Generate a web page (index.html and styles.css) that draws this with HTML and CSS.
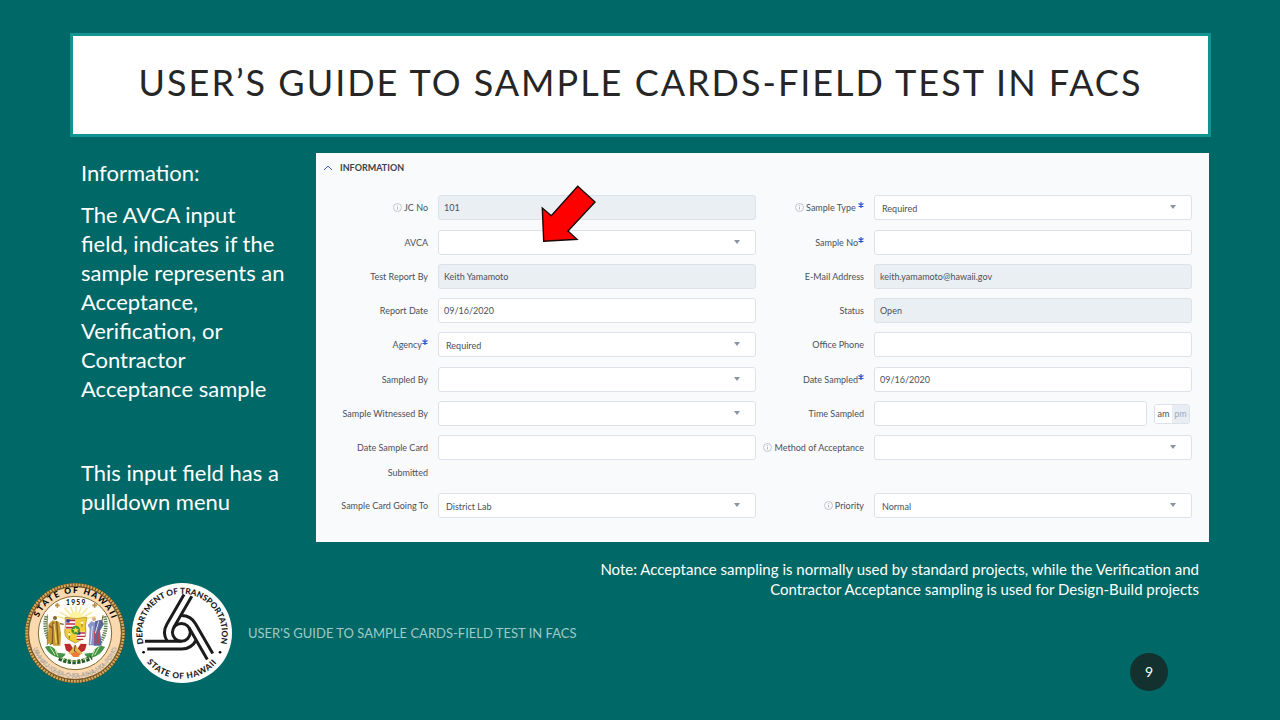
FILE: index.html
```html
<!DOCTYPE html>
<html lang="en">
<head>
    <meta charset="UTF-8">
    <meta name="viewport" content="width=device-width, initial-scale=1.0">
    <title>User's Guide to Sample Cards</title>
    <link rel="stylesheet" href="styles.css">
</head>
<body>
    <svg class="defs" width="0" height="0" aria-hidden="true">
        <symbol id="info" viewBox="0 0 18 18">
            <circle cx="9" cy="9" r="8" fill="none" stroke="currentColor" stroke-width="1.5"/>
            <path d="M9 8v5M9 4.5v2" stroke="currentColor" stroke-width="2"/>
        </symbol>
        <symbol id="star" viewBox="0 0 12 12">
            <path d="M6 0v12M1 3l10 6M11 3L1 9" stroke="currentColor" stroke-width="2.4"/>
        </symbol>
    </svg>

    <header class="title-box">
        <h1>USER’S GUIDE TO SAMPLE CARDS-FIELD TEST IN FACS</h1>
    </header>

    <main class="content">
        <section class="side">
            <p>Information:</p>
            <p>The AVCA input field, indicates if the sample represents an Acceptance, Verification, or Contractor Acceptance sample</p>
            <p class="spaced">This input field has a pulldown menu</p>
        </section>

        <form class="panel">
            <h2>
                <svg class="chevron" viewBox="0 0 8 6"><path d="M0 5l4-4 4 4" fill="none" stroke="#3d55c4"/></svg>
                INFORMATION
            </h2>
            <div class="fields">
                <label for="jc"><svg class="info"><use href="#info"/></svg> JC No</label>
                <input id="jc" type="text" value="101" readonly>
                <label for="type"><svg class="info"><use href="#info"/></svg> Sample Type <svg class="star"><use href="#star"/></svg></label>
                <div class="select"><select id="type"><option>Required</option></select></div>

                <label for="avca">AVCA</label>
                <div class="select"><select id="avca"><option></option></select></div>
                <label for="sampleno">Sample No<svg class="star"><use href="#star"/></svg></label>
                <input id="sampleno" type="text">

                <label for="reportby">Test Report By</label>
                <input id="reportby" type="text" value="Keith Yamamoto" readonly>
                <label for="email">E-Mail Address</label>
                <input id="email" type="text" value="keith.yamamoto@hawaii.gov" readonly>

                <label for="reportdate">Report Date</label>
                <input id="reportdate" type="text" value="09/16/2020">
                <label for="status">Status</label>
                <input id="status" type="text" value="Open" readonly>

                <label for="agency">Agency<svg class="star"><use href="#star"/></svg></label>
                <div class="select"><select id="agency"><option>Required</option></select></div>
                <label for="phone">Office Phone</label>
                <input id="phone" type="text">

                <label for="sampledby">Sampled By</label>
                <div class="select"><select id="sampledby"><option></option></select></div>
                <label for="datesampled">Date Sampled<svg class="star"><use href="#star"/></svg></label>
                <input id="datesampled" type="text" value="09/16/2020">

                <label for="witness">Sample Witnessed By</label>
                <div class="select"><select id="witness"><option></option></select></div>
                <label for="time">Time Sampled</label>
                <div class="time">
                    <input id="time" type="text">
                    <div class="ampm">
                        <button type="button">am</button>
                        <button type="button" class="off">pm</button>
                    </div>
                </div>

                <label for="submitted">Date Sample Card Submitted</label>
                <input id="submitted" type="text">
                <label for="method"><svg class="info"><use href="#info"/></svg> Method of Acceptance</label>
                <div class="select"><select id="method"><option></option></select></div>

                <label for="going">Sample Card Going To</label>
                <div class="select"><select id="going"><option>District Lab</option></select></div>
                <label for="priority"><svg class="info"><use href="#info"/></svg> Priority</label>
                <div class="select"><select id="priority"><option>Normal</option></select></div>
            </div>

            <svg class="arrow" viewBox="0 0 58 60">
                <path d="M3.7 57.3L2.3 24l9 7.7L37.7 2.3 55 18 28 47l9 8.3z" fill="#ff0000" stroke="#1a0808" stroke-width="1.4"/>
            </svg>
        </form>
    </main>

    <footer class="bottom">
        <div class="brand">
            <svg class="seal" viewBox="14 15 300 300" role="img" aria-label="State of Hawaii seal">
                <defs>
                    <path id="sealTop" d="M48 185A118 118 0 1 1 280 185"/>
                    <path id="sealBottom" d="M30 165a134 134 0 0 0 268 0"/>
                </defs>
                <circle cx="164" cy="165" r="150" fill="#6d4c1d"/>
                <circle cx="164" cy="165" r="145" fill="none" stroke="#d5ab5f" stroke-width="8" stroke-dasharray="6 3"/>
                <circle cx="164" cy="165" r="139" fill="#fbd9ae" stroke="#5c421d" stroke-width="2"/>
                <circle cx="164" cy="165" r="110" fill="#fffef8" stroke="#85672f" stroke-width="3"/>
                <text class="seal-name"><textPath href="#sealTop" startOffset="51%" text-anchor="middle">STATE OF HAWAII</textPath></text>
                <text class="seal-motto"><textPath href="#sealBottom" startOffset="50%" text-anchor="middle">UA·MAU·KE·EA·O·KA·AINA·I·KA·PONO</textPath></text>
                <text class="seal-year" x="168" y="80" text-anchor="middle">1959</text>
                <path d="M111 75v14M104 82h14M223 75v14M216 82h14" stroke="#b88b4b" stroke-width="5"/>
                <!-- rising sun -->
                <g stroke="#f5e690" stroke-width="4">
                    <path d="M167 130V84M167 130l-16-44M167 130l16-44M167 130l-34-40M167 130l34-40M167 130l-49-28M167 130l49-28M167 130l-58-15M167 130l58-15"/>
                </g>
                <circle cx="167" cy="123" r="22" fill="#fff3a0"/>
                <!-- fern leaves at both sides -->
                <g fill="none" stroke="#58804f" stroke-width="11" stroke-dasharray="4 3">
                    <path d="M78 115q-12 45 18 86"/>
                    <path d="M253 115q12 45-18 86"/>
                </g>
                <path d="M74 207q22-10 37 17l25 3q-5 13-22 12-25-5-40-32zM254 207q-22-10-37 17l-25 3q5 13 22 12 25-5 40-32z" fill="#3f9445"/>
                <path d="M90 208l14 23M105 216l8 19M236 208l-13 23M223 216l-8 19" stroke="#d6e8b2" stroke-width="3"/>
                <path d="M116 241q48 24 98-3" fill="none" stroke="#24592c" stroke-width="13" stroke-dasharray="10 4"/>
                <path d="M120 239q44 22 89-2" fill="none" stroke="#92bb5d" stroke-width="4" stroke-dasharray="5 5"/>
                <!-- king -->
                <circle cx="104" cy="120" r="6" fill="#8a642b"/>
                <path d="M97 127l-12 11-4 60 14-3 4 8h21l2-36-5-35z" fill="#c79a32"/>
                <path d="M98 133l-2 65M109 129l5 70M86 143l12 8M119 137l11 2" stroke="#7c5920" stroke-width="4"/>
                <path d="M81 109v92" stroke="#81632e" stroke-width="2"/>
                <path d="M101 138l7 58" stroke="#efd16b" stroke-width="4"/>
                <!-- liberty -->
                <circle cx="221" cy="123" r="6" fill="#d8ad8b"/>
                <path d="M213 130l-11 12 6 10-3 50h17l4-68z" fill="#8b97cb"/>
                <path d="M224 130l19-5 8 13-12 20 5 45h-24z" fill="#5b679f"/>
                <path d="M230 151l7 46M223 159l3 40" stroke="#c6444b" stroke-width="5"/>
                <path d="M216 144l-5 54M235 130l-10 36" stroke="#e4e8f4" stroke-width="3"/>
                <path d="M248 112l-5 27" stroke="#705a49" stroke-width="3"/>
                <!-- shield -->
                <path d="M135 118q32 8 64 0l-4 28q8 36-18 42l-12 7-13-7q-25-8-17-43z" fill="#f0cf37" stroke="#a27c1d" stroke-width="2"/>
                <path d="M138 124h26v29h-28z" fill="#fff"/>
                <path d="M138 127h26M137 138h27M137 149h27" stroke="#bd2839" stroke-width="5"/>
                <path d="M138 124h10v10h-10z" fill="#324487"/>
                <path d="M169 161h26l-3 23h-23z" fill="#fff"/>
                <path d="M169 165h26M169 175h26M169 184h20" stroke="#b82c45" stroke-width="4"/>
                <path d="M169 161h11v9h-11z" fill="#324487"/>
                <path d="M185 128v18M147 163v19" stroke="#8b6d2c" stroke-width="3"/>
                <circle cx="185" cy="134" r="4" fill="#fff7cf"/>
                <circle cx="147" cy="169" r="4" fill="#fff7cf"/>
                <circle cx="166" cy="156" r="13" fill="#429334"/>
                <path d="M166 147l3 6h7l-5 5 2 7-7-4-6 4 2-7-6-5h7z" fill="#f4df49"/>
                <!-- phoenix -->
                <path d="M164 220l-15-23-17 1 5 19 20 12zM167 220l14-23 18 1-5 19-20 12z" fill="#bd2c2c"/>
                <path d="M144 226q12-11 20-27 9 15 23 27-22 13-43 0z" fill="#e4b94f"/>
                <path d="M165 201l-3 18 8 5" fill="none" stroke="#6d382b" stroke-width="3"/>
                <path d="M151 227q15-10 30 0l-7 10h-15z" fill="#eb7b39"/>
            </svg>

            <svg class="seal" viewBox="11 14 302 302" role="img" aria-label="Department of Transportation logo">
                <defs>
                    <path id="dotTop" d="M48 204a120 120 0 1 1 228 0"/>
                    <path id="dotBottom" d="M24 165a138 138 0 0 0 276 0"/>
                    <path id="arm" d="M50 190h110M57 213h103A50 50 0 0 0 205 186"/>
                </defs>
                <circle cx="162" cy="165" r="151" fill="#fff"/>
                <g fill="none" stroke="#1b1b1b" stroke-width="9">
                    <circle cx="160" cy="163" r="27"/>
                    <use href="#arm"/>
                    <use href="#arm" transform="rotate(120 160 163)"/>
                    <use href="#arm" transform="rotate(240 160 163)"/>
                </g>
                <text class="dot-name"><textPath href="#dotTop" startOffset="50%" text-anchor="middle">DEPARTMENT OF TRANSPORTATION</textPath></text>
                <text class="dot-name dot-state"><textPath href="#dotBottom" startOffset="50%" text-anchor="middle">STATE OF HAWAII</textPath></text>
                <circle cx="46" cy="223" r="4"/>
                <circle cx="277" cy="223" r="4"/>
            </svg>
            <span class="footer-title">USER'S GUIDE TO SAMPLE CARDS-FIELD TEST IN FACS</span>
        </div>
        <div class="notes">
            <p>Note: Acceptance sampling is normally used by standard projects, while the Verification and Contractor Acceptance sampling is used for Design-Build projects</p>
            <span class="page-number">9</span>
        </div>
    </footer>
</body>
</html>
```
FILE: styles.css
```css
* {
    box-sizing: border-box;
}
body {
    margin: 0;
    padding-top: 33px;
    min-height: 100vh;
    background-color: #006866;
    color: white;
    font-family: "Gill Sans MT", Lato, sans-serif;
}
h1, h2, p {
    margin: 0;
    font-weight: normal;
}
.defs {
    position: absolute;
}
.title-box {
    margin: 0 69px 16px 70px;
    padding: 24px 20px 30px;
    background-color: white;
    border: 3px solid #109492;
    text-align: center;
}
.title-box h1 {
    color: #262626;
    font-size: 36px;
    line-height: 44px;
    letter-spacing: 2px;
}
.content {
    display: flex;
    margin: 0 71px 0 81px;
}
.side {
    flex: 0 0 235px;
    padding: 5px 30px 0 0;
    font-size: 22px;
    line-height: 29px;
}
.side p {
    margin-bottom: 13px;
}
.side .spaced {
    margin-top: 55px;
}

/* form */
.panel {
    position: relative;
    flex: 1;
    padding: 7px 17px 24px 8px;
    background-color: #f9fafc;
    color: #4a5059;
}
.panel h2 {
    display: flex;
    align-items: center;
    gap: 8px;
    margin-bottom: 20px;
    font-size: 9px;
    line-height: 15px;
    font-weight: bold;
    color: #3c424d;
}
.chevron {
    width: 8px;
    height: 6px;
}
.fields {
    display: grid;
    grid-template-columns: 114px 1fr 118px 1fr;
    grid-template-rows: 26px 25px 25px 25px 26px 25px 25px 49px 25px;
    row-gap: 9px;
    align-items: start;
}
label {
    padding-right: 10px;
    font-size: 9px;
    line-height: 25px;
    text-align: right;
}
.info {
    width: 9px;
    height: 9px;
    color: #b0b6bf;
    vertical-align: -1px;
}
.star {
    width: 6px;
    height: 6px;
    color: #2f55cc;
    vertical-align: 3px;
}
input, select {
    display: block;
    width: 100%;
    height: 25px;
    padding: 0 5px;
    background-color: white;
    border: 1px solid #dde2e8;
    border-radius: 3px;
    color: #4a5059;
    font-family: inherit;
    font-size: 9px;
}
input[readonly] {
    background-color: #eaeff4;
}
select {
    appearance: none;
    padding: 1px 7px 0;
}
.select {
    position: relative;
}
.select::after {
    content: "";
    position: absolute;
    right: 16px;
    top: 10px;
    border: 3px solid transparent;
    border-top: 4px solid #8a94a1;
    border-bottom: 0;
}
.time {
    display: flex;
    align-items: center;
    gap: 7px;
    padding-right: 2px;
}
.time input {
    flex: 1;
    min-width: 0;
}
.ampm {
    display: flex;
    border: 1px solid #dde2e8;
    border-radius: 3px;
    overflow: hidden;
}
.ampm button {
    width: 17px;
    height: 18px;
    padding: 0;
    border: none;
    background-color: white;
    color: #4a5059;
    font-family: inherit;
    font-size: 9px;
}
.ampm .off {
    background-color: #e8edf3;
    color: #9aa9bd;
}
.arrow {
    position: absolute;
    left: 224px;
    top: 31px;
    width: 58px;
    height: 60px;
}

/* bottom */
.bottom {
    display: flex;
    justify-content: space-between;
    padding: 17px 81px 0 25px;
}
.brand {
    display: flex;
    align-items: center;
    gap: 7px;
    padding-top: 24px;
    height: 124px;
}
.seal {
    flex: none;
    width: 100px;
    height: 100px;
}
.seal-name {
    font-size: 25px;
    font-weight: 900;
    letter-spacing: 5px;
}
.seal-motto {
    font-size: 18px;
    font-weight: bold;
    fill: #fff3e2;
    stroke: #8f857c;
    stroke-width: 1px;
}
.seal-year {
    font-size: 20px;
    font-weight: bold;
    letter-spacing: 4px;
}
.dot-name {
    font-size: 25px;
    font-weight: 900;
    fill: #1b1b1b;
}
.dot-state {
    letter-spacing: 2px;
}
.footer-title {
    margin-left: 9px;
    font-size: 13px;
    white-space: nowrap;
    color: #9ecac8;
}
.notes {
    display: flex;
    flex-direction: column;
    align-items: flex-end;
    justify-content: space-between;
    height: 132px;
}
.notes p {
    max-width: 604px;
    font-size: 15px;
    line-height: 20px;
    text-align: right;
}
.page-number {
    width: 38px;
    height: 38px;
    margin-right: 31px;
    border-radius: 50%;
    background-color: #12312f;
    font-size: 14px;
    line-height: 38px;
    text-align: center;
}
```
